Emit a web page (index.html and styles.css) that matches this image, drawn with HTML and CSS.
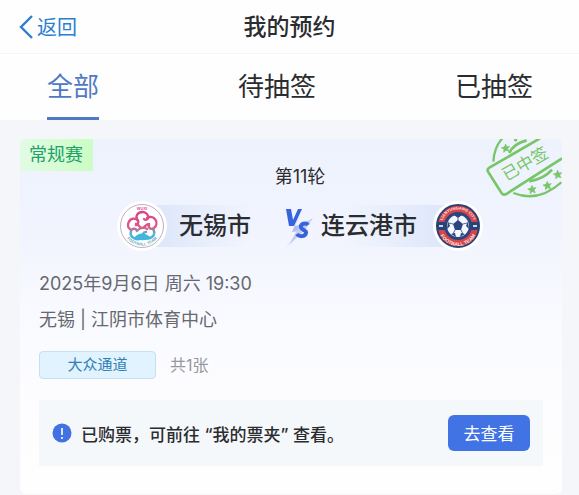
FILE: index.html
```html
<!DOCTYPE html>
<html lang="zh-CN">
<head>
<meta charset="utf-8">
<meta name="viewport" content="width=device-width, initial-scale=1">
<title>我的预约</title>
<link rel="stylesheet" href="styles.css">
</head>
<body>
<header class="navbar">
  <a class="back" href="#">
    <svg width="15" height="26" viewBox="0 0 15 26"><path d="M14 2 3 13l11 11" fill="none" stroke="#2b7fd0" stroke-width="2.400"/></svg>
    <span>返回</span>
  </a>
  <h1 class="title">我的预约</h1>
</header>
<nav class="tabs">
  <a class="tab active" href="#">全部</a>
  <a class="tab" href="#">待抽签</a>
  <a class="tab" href="#">已抽签</a>
</nav>

<main class="list">
  <article class="card">
    <span class="kind">常规赛</span>
    <!-- lottery stamp, cut off by the card corner -->
    <svg class="stamp" width="77" height="62" viewBox="45 40 231 186">
      <g fill="none" stroke="#78c668" stroke-width="8">
        <path d="M70 108Q72 66 97 38M130 202Q205 232 274 170" stroke-width="7"/>
        <path d="M118 82Q130 54 170 44M178 167Q222 160 246 132" />
        <path d="M210 38 58 126Q50 131 54 138L94 201Q100 210 109 205L276 98" />
      </g>
      <g fill="#78c668" stroke="#78c668" stroke-width="2">
        <path id="star" d="M107 55l3 8 9-1-6 7 4 8-9-3-7 6 1-9-8-5 9-2z"/>
        <use href="#star" x="79" y="124"/>
        <use href="#star" x="125" y="112"/>
        <use href="#star" x="156" y="79"/>
        <circle cx="137" cy="43" r="4"/>
      </g>
      <text class="stamp-text" transform="translate(109 167) rotate(-30)">已中签</text>
    </svg>

    <p class="round">第11轮</p>
    <div class="match">
      <div class="team home">
        <svg class="crest" width="50" height="50" viewBox="0 0 50 50">
          <defs>
            <linearGradient id="flower" x1="0" y1="10" x2="0" y2="40" gradientUnits="userSpaceOnUse">
              <stop offset="0" stop-color="#d93f8c"/><stop offset=".55" stop-color="#e05a86"/><stop offset=".75" stop-color="#55b4d6"/><stop offset="1" stop-color="#43b5dc"/>
            </linearGradient>
            <path id="homeRing" d="M5.500 25a19.500 19.500 0 0 0 39 0"/>
          </defs>
          <circle cx="25" cy="25" r="25" fill="#fff"/>
          <circle cx="25" cy="25" r="21.500" fill="#fff" stroke="#b09aab" stroke-width=".8"/>
          <g fill="none" stroke="url(#flower)" stroke-width="2.400" stroke-linecap="round">
            <path d="M20 18c-3-7 9-10 11-3 1 3-2 5-4 3"/>
            <path d="M30 17c7-4 13 5 7 10-3 2-6 0-5-3"/>
            <path d="M36 28c4 6-3 12-9 8-2-2-1-5 2-5"/>
            <path d="M26 36c-5 5-14 1-12-6 1-3 5-3 6 0"/>
            <path d="M14 29c-6-4-2-13 5-11 3 1 3 5 0 6"/>
            <path d="M19 23c3 0 3 4 6 4s3-4 7-4M21 29c3-3 6-3 9-1"/>
          </g>
          <path d="M17 37c4-6 12-6 17 0-5 3-12 3-17 0z" fill="#43b5dc"/>
          <text class="crest-text home-top" x="25" y="9">WUXI</text>
          <text class="crest-text home-bottom"><textPath href="#homeRing" startOffset="50%">FOOTBALL TEAM</textPath></text>
        </svg>
        <span class="name">无锡市</span>
      </div>
      <svg class="vs" width="28" height="50" viewBox="0 0 28 50" role="img" aria-label="VS">
        <path d="M19 2 10 25l7-2L0 49l13-19-6 1z" fill="#b4bff0"/>
        <path d="M28 17 15 24 4 44 20 29z" fill="#c3ccf3"/>
        <path d="M1 8h5l2 11 5-11h4L9 25H4z" fill="#3763dc"/>
        <path d="M23 24c-2-3-8-1-7 2 0 3 6 3 5 6-1 4-7 4-9 1" fill="none" stroke="#3763dc" stroke-width="4"/>
      </svg>
      <div class="team away">
        <span class="name">连云港市</span>
        <svg class="crest" width="50" height="50" viewBox="0 0 50 50">
          <defs>
            <path id="ringTop" d="M8.500 25a16.500 16.500 0 0 1 33 0"/>
            <path id="ringBottom" d="M5 25a20 20 0 0 0 40 0"/>
          </defs>
          <circle cx="25" cy="25" r="25" fill="#fff"/>
          <circle cx="25" cy="25" r="21" fill="#d6454b" stroke="#294276" stroke-width="2"/>
          <path d="M4 21h9v8H4zM37 21h9v8h-9z" fill="#294276"/>
          <path d="M6 25h4M40 25h4" stroke="#c9d7f2" stroke-width="2"/>
          <circle cx="25" cy="25" r="14" fill="#29447e"/>
          <circle cx="25" cy="25" r="11" fill="#f5f8ff"/>
          <g fill="#29447e">
            <path d="M25 19l5 4-2 6h-6l-2-6z"/>
            <path d="M21 14h8l-4 3zM35 20l1 8-3-3zM15 20l-1 8 3-3zM18 33l4-1 1 4zM32 33l-4-1-1 4z"/>
          </g>
          <path d="M25 17v3M30 23l4-1M28 29l2 4M22 29l-2 4M20 23l-4-1" stroke="#29447e" stroke-width=".8"/>
          <text class="crest-text away-top"><textPath href="#ringTop" startOffset="50%">LIANYUNGANG CITY</textPath></text>
          <text class="crest-text away-bottom"><textPath href="#ringBottom" startOffset="50%">FOOTBALL TEAM</textPath></text>
        </svg>
      </div>
    </div>

    <div class="info">
      <p>2025年9月6日 周六 19:30</p>
      <p>无锡 | 江阴市体育中心</p>
    </div>
    <div class="ticket">
      <span class="channel">大众通道</span>
      <span class="count">共1张</span>
    </div>
    <div class="notice">
      <svg width="20" height="20" viewBox="0 0 20 20"><circle cx="10" cy="10" r="9.500" fill="#4272e2"/><path d="M10 5v7M10 14v2" stroke="#fff" stroke-width="1.600"/></svg>
      <p>已购票，可前往 “我的票夹” 查看。</p>
      <button class="go" type="button">去查看</button>
    </div>
  </article>
</main>
</body>
</html>
```

FILE: styles.css
```css
* { box-sizing: border-box; }
body {
  margin: 0;
  background: #f5f6fa;
  color: #2b2c30;
  font-family: Inter, "Noto Sans CJK SC", sans-serif;
}
h1, p { margin: 0; }
a { text-decoration: none; color: inherit; }

.navbar {
  display: grid;
  grid-template-columns: 1fr auto 1fr;
  align-items: center;
  height: 54px;
  padding: 0 18px;
  background: #fefefe;
  border-bottom: 1px solid #f5f5f6;
}
.back {
  display: flex;
  align-items: center;
  gap: 4px;
  color: #2b7fd0;
  font-size: 20px;
}
.title { font-size: 23px; line-height: 32px; font-weight: 500; }

.tabs {
  display: flex;
  justify-content: space-between;
  height: 66px;
  padding: 0 46px 0 47px;
  background: #fefefe;
}
.tab { font-size: 26px; line-height: 66px; }
.tab.active { color: #5079c4; border-bottom: 3px solid #5079c4; }

.list { padding: 19px 17px 1px 20px; }
.card {
  position: relative;
  overflow: hidden;
  padding: 26px 19px 28px;
  border-radius: 6px;
  background: linear-gradient(#edf2fd, #f1f4fe 25%, #f9faff 50%, #fdfdff 75%, #fefefe);
}
.kind {
  position: absolute;
  top: 0;
  left: 0;
  padding: 0 10px 0 9px;
  background: linear-gradient(90deg, #e2fbe4, #ccfdc4);
  color: #22a06a;
  font-size: 18px;
  line-height: 32px;
}
.stamp { position: absolute; top: 0; right: 0; }
.stamp-text { font-size: 50px; fill: #78c668; }

.round {
  padding-left: 18px;
  font-size: 18px;
  line-height: 24px;
  text-align: center;
}
.match {
  display: flex;
  justify-content: center;
  align-items: center;
  gap: 8px;
  margin: 12px 0 15px;
  padding-left: 18px;
}
.team {
  display: flex;
  align-items: center;
  background-size: 100% 42px;
  background-position: center;
  background-repeat: no-repeat;
  border-radius: 25px;
}
.home { gap: 12px; min-width: 160px; background-image: linear-gradient(90deg, #dfe8fa 30%, #f1f4fe00 85%); }
.away { gap: 16px; background-image: linear-gradient(270deg, #dfe8fa 30%, #f1f4fe00 85%); }
.name { font-size: 24px; line-height: 36px; font-weight: 500; }
.crest-text { font-family: "Liberation Sans", sans-serif; font-weight: 700; text-anchor: middle; }
.home-top { font-size: 4px; fill: #d95495; }
.home-bottom { font-size: 4px; fill: #63aac4; }
.away-top { font-size: 4px; fill: #ffe3df; }
.away-bottom { font-size: 5px; fill: #ffe3df; }

.info { color: #66686e; font-size: 18px; line-height: 36px; }
.ticket {
  display: flex;
  align-items: center;
  gap: 14px;
  margin: 13px 0 21px;
}
.channel {
  width: 117px;
  border: 1px solid #c5e0ee;
  border-radius: 4px;
  background: #e1f3fe;
  color: #317fb5;
  font-size: 15px;
  line-height: 26px;
  text-align: center;
}
.count { color: #96979c; font-size: 16px; line-height: 28px; }

.notice {
  display: flex;
  align-items: center;
  gap: 9px;
  height: 66px;
  padding: 0 13px;
  background: #f5f8fa;
  font-size: 17px;
  font-weight: 500;
}
.notice p { flex: 1; }
.go {
  width: 82px;
  height: 36px;
  padding: 0 0 2px;
  border: 0;
  border-radius: 6px;
  background: #4273e5;
  color: #fff;
  font: 17px Inter, "Noto Sans CJK SC", sans-serif;
}
```
